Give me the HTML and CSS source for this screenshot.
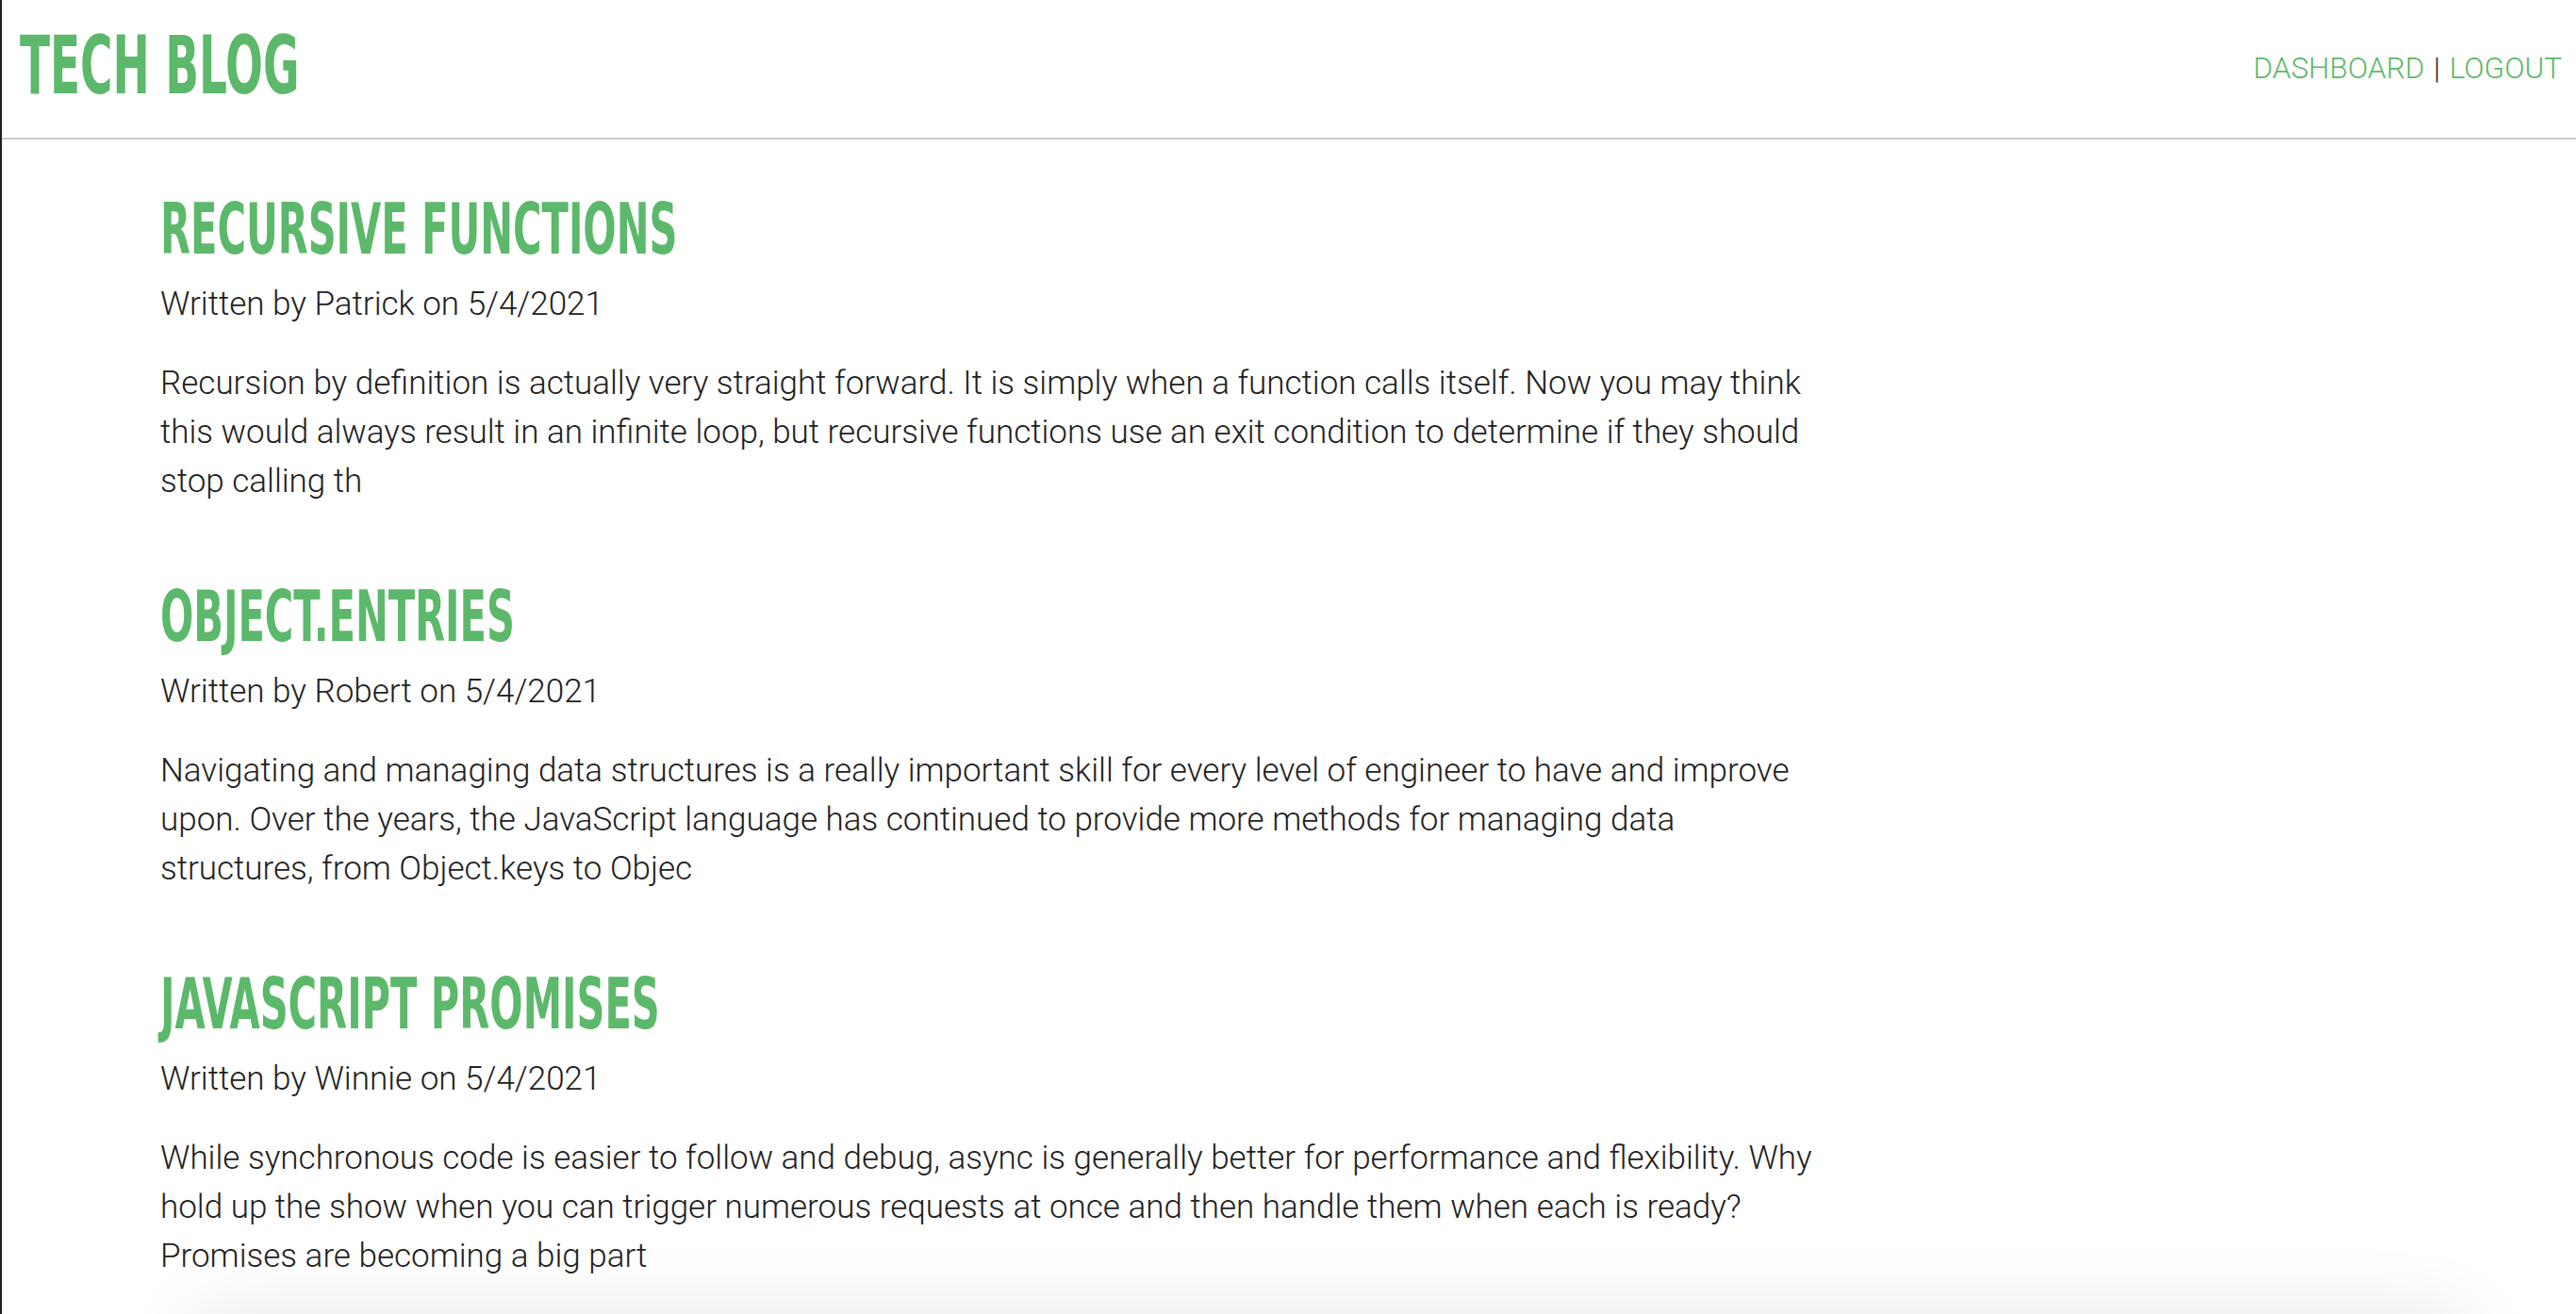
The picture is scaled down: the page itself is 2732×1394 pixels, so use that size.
FILE: index.html
```html
<!DOCTYPE html>
<html lang="en">
<head>
<meta charset="utf-8">
<title>Tech Blog</title>
<link rel="stylesheet" href="styles.css">
</head>
<body>
<div class="page">
  <header class="site-header">
    <h1 class="brand"><span class="condensed">TECH BLOG</span></h1>
    <nav class="nav">
      <a class="nav-link" href="#">DASHBOARD</a>
      <span class="nav-sep">|</span>
      <a class="nav-link" href="#">LOGOUT</a>
    </nav>
  </header>

  <main class="posts">
    <article class="post">
      <h2 class="post-title"><span class="condensed">RECURSIVE FUNCTIONS</span></h2>
      <p class="post-meta">Written by Patrick on 5/4/2021</p>
      <p class="post-body">Recursion by definition is actually very straight forward. It is simply when a function calls itself. Now you may think this would always result in an infinite loop, but recursive functions use an exit condition to determine if they should stop calling th</p>
    </article>
    <article class="post">
      <h2 class="post-title"><span class="condensed">OBJECT.ENTRIES</span></h2>
      <p class="post-meta">Written by Robert on 5/4/2021</p>
      <p class="post-body">Navigating and managing data structures is a really important skill for every level of engineer to have and improve upon. Over the years, the JavaScript language has continued to provide more methods for managing data structures, from Object.keys to Objec</p>
    </article>
    <article class="post">
      <h2 class="post-title"><span class="condensed">JAVASCRIPT PROMISES</span></h2>
      <p class="post-meta">Written by Winnie on 5/4/2021</p>
      <p class="post-body">While synchronous code is easier to follow and debug, async is generally better for performance and flexibility. Why hold up the show when you can trigger numerous requests at once and then handle them when each is ready? Promises are becoming a big part</p>
    </article>
  </main>

  <div class="below-card"></div>
</div>
</body>
</html>
```

FILE: styles.css
```css
html {
  overflow: hidden;
}

body {
  margin: 0;
  background: #ffffff;
  color: #212121;
  font-family: Roboto, "Liberation Sans", sans-serif;
  font-weight: 300;
}

.page {
  border-left: 2px solid #1e1e1e;
  min-height: 1394px;
}

.site-header {
  display: flex;
  justify-content: space-between;
  align-items: flex-start;
  padding: 27px 15px 34px 19px;
  border-bottom: 2px solid #cccccc;
}

.brand {
  margin: 0;
  font-family: "DejaVu Sans Condensed", "DejaVu Sans", sans-serif;
  font-weight: 700;
  font-size: 85px;
  line-height: 85px;
  color: #5cb86a;
}

.condensed {
  display: inline-block;
  transform: scaleX(0.614);
  transform-origin: left center;
  white-space: nowrap;
}

.nav {
  padding-top: 30px;
  font-size: 31.5px;
  line-height: 32px;
  font-weight: 300;
}

.nav-link {
  color: #5cb86a;
  text-decoration: none;
}

.nav-sep {
  color: #222222;
  margin: 0 2px;
}

.posts {
  margin-left: 168px;
  width: 1770px;
  padding-top: 58px;
}

.post {
  margin-bottom: 80px;
}

.post:last-child {
  margin-bottom: 0;
}

.post-title {
  margin: 0;
  font-family: "DejaVu Sans Condensed", "DejaVu Sans", sans-serif;
  font-weight: 700;
  font-size: 75px;
  line-height: 75px;
  color: #5cb86a;
}

.post-title .condensed {
  transform: scaleX(0.616);
}

.post-meta {
  margin: 16px 0 0;
  font-size: 35px;
  line-height: 52px;
}

.post-body {
  margin: 32px 0 0;
  font-size: 35px;
  line-height: 52px;
}

.below-card {
  margin: 42px 0 0 198px;
  width: 2420px;
  height: 300px;
  border-radius: 40px;
  background: #ffffff;
  box-shadow: 0 -6px 80px rgba(0, 0, 0, 0.1);
}
```
